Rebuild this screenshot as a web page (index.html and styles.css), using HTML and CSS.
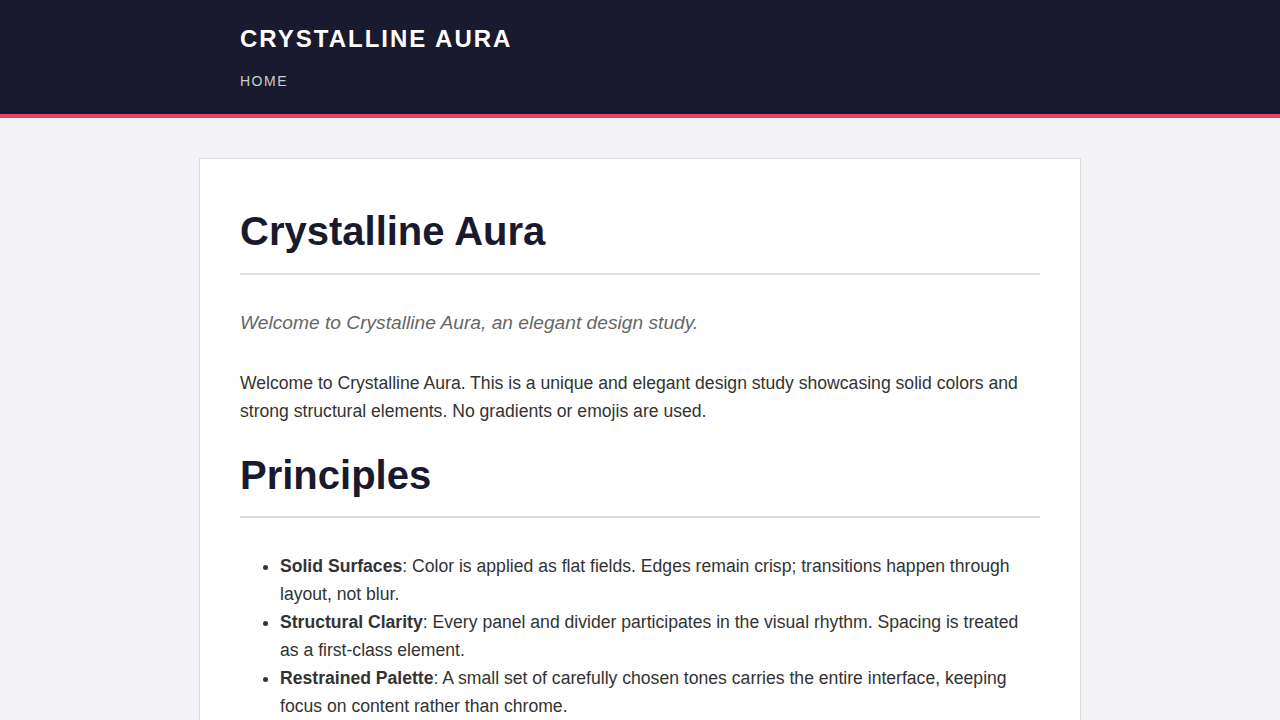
FILE: index.html
```html
<!DOCTYPE html>
<html lang="en">
<head>
  <meta charset="UTF-8">
  <title>Crystalline Aura</title>
  <meta name="viewport" content="width=device-width,initial-scale=1">
  <link rel="stylesheet" href="styles.css">
</head>
<body>
  <header class="site-header">
    <div class="wrap">
      <div class="site-title">Crystalline Aura</div>
      <nav class="site-nav">
        <a href="#">Home</a>
      </nav>
    </div>
  </header>
  <main class="card">
    <h1>Crystalline Aura</h1>
    <p class="lead">Welcome to Crystalline Aura, an elegant design study.</p>
    <p>Welcome to Crystalline Aura. This is a unique and elegant design study showcasing solid colors and strong structural elements. No gradients or emojis are used.</p>
    <h2>Principles</h2>
    <ul>
      <li><strong>Solid Surfaces</strong>: Color is applied as flat fields. Edges remain crisp; transitions happen through layout, not blur.</li>
      <li><strong>Structural Clarity</strong>: Every panel and divider participates in the visual rhythm. Spacing is treated as a first-class element.</li>
      <li><strong>Restrained Palette</strong>: A small set of carefully chosen tones carries the entire interface, keeping focus on content rather than chrome.</li>
      <li><strong>Quiet Typography</strong>: Type does the talking, set in a single family with weight doing the work of hierarchy.</li>
    </ul>
  </main>
</body>
</html>
```

FILE: styles.css
```css
body { font-family: "Liberation Sans", Arial, sans-serif; background: #f4f4f8; color: #333; margin: 0; font-size: 17.6px; line-height: 28px; }
.wrap { max-width: 800px; margin: 0 auto; }
.site-header { background: #1a1a2e; border-bottom: 4px solid #e94560; padding: 25px 0 25px; }
.site-title { color: #fff; font-size: 24px; font-weight: bold; letter-spacing: 2px; text-transform: uppercase; line-height: 28px; }
.site-nav { margin-top: 19px; line-height: 16px; }
.site-nav a { color: #ccc; font-size: 14px; letter-spacing: 1.5px; text-transform: uppercase; text-decoration: none; }
.card { max-width: 800px; margin: 40px auto; background: #fff; border: 1px solid #ddd; padding: 40px; }
h1, h2 { color: #1a1a2e; font-size: 40px; line-height: 64px; margin: 0; padding-bottom: 10px; border-bottom: 2px solid #ddd; }
h2 { margin-top: 18px; padding-bottom: 9px; }
.lead { color: #666; font-style: italic; font-size: 19.2px; margin: 34px 0 32px; }
p { margin: 0 0 18px; }
ul { padding-left: 40px; margin: 34px 0 0; }
```
